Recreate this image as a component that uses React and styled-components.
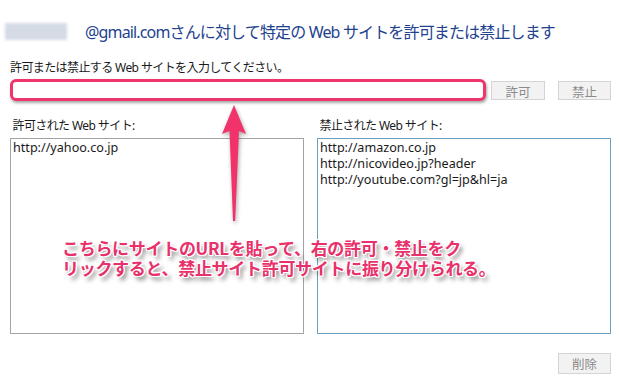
import React from "react";
import styled, { createGlobalStyle } from "styled-components";

const GlobalStyle = createGlobalStyle`
  html, body {
    margin: 0;
    padding: 0;
    background: #fff;
  }
  body {
    font-family: "Noto Sans", "Noto Sans CJK JP", sans-serif;
    color: #222;
  }
`;

const Page = styled.div`
  position: relative;
  width: 619px;
  height: 382px;
  box-sizing: border-box;
  padding: 20px 8px 0 10px;
  overflow: hidden;
`;

const Title = styled.h1`
  margin: 0 0 0 -5px;
  display: flex;
  align-items: center;
  height: 22px;
  font-size: 16px;
  font-weight: 400;
  color: #22428f;
  white-space: nowrap;
  letter-spacing: -0.85px;
`;

const Blurred = styled.span`
  display: inline-block;
  flex: none;
  width: 62px;
  height: 17px;
  background: #d5dbe4;
  filter: blur(1.5px);
`;

const TitleText = styled.span`
  margin-left: 18px;
`;

const Label = styled.div`
  margin-top: ${(p) => p.$top || 0}px;
  font-size: 12px;
  line-height: 16px;
  letter-spacing: -0.6px;
  color: #1a1a1a;
  white-space: nowrap;
`;

const InputRow = styled.div`
  display: flex;
  align-items: center;
  margin-top: 3px;
  height: 22px;
`;

const UrlInput = styled.input`
  flex: 1;
  height: 22px;
  box-sizing: border-box;
  margin: 0 5px 0 0;
  border: 3px solid #ee356c;
  border-radius: 6px;
  box-shadow: 1px 2px 3px rgba(0, 0, 0, 0.35);
  background: #fff;
  outline: none;
`;

const Button = styled.button`
  width: ${(p) => p.$w || 53}px;
  height: ${(p) => p.$h || 19}px;
  margin-left: ${(p) => p.$gap || 0}px;
  padding: 0;
  border: 1px solid #d4d4d4;
  background: #f2f2f2;
  color: #8a8a8a;
  font-family: "Noto Sans CJK JP", sans-serif;
  font-size: 12.5px;
`;

const Columns = styled.div`
  display: grid;
  grid-template-columns: 1fr 1fr;
  column-gap: 13px;
  margin-top: 17px;
`;

const Column = styled.div`
  display: flex;
  flex-direction: column;
`;

const ListBox = styled.div`
  margin-top: 4px;
  height: 196px;
  box-sizing: border-box;
  border: 1px solid ${(p) => (p.$focused ? "#6c9fc0" : "#a3a3a3")};
  padding: 1px 2px;
  font-family: "Noto Sans", sans-serif;
  font-size: 12.6px;
  line-height: 16px;
  color: #1a1a1a;
`;

const Footer = styled.div`
  display: flex;
  justify-content: flex-end;
  margin-top: 19px;
`;

const Arrow = styled.svg`
  position: absolute;
  left: 220px;
  top: 103px;
  filter: drop-shadow(1px 2px 2px rgba(0, 0, 0, 0.35));
`;

const Note = styled.div`
  position: absolute;
  left: 62px;
  top: 238px;
  font-family: "Noto Sans CJK JP", sans-serif;
  font-weight: 700;
  font-size: 17px;
  line-height: 20px;
  letter-spacing: -0.3px;
  color: #e8306b;
  white-space: nowrap;
  text-shadow:
    1px 0 0 #fff, -1px 0 0 #fff, 0 1px 0 #fff, 0 -1px 0 #fff,
    1px 1px 0 #fff, -1px -1px 0 #fff, 1px -1px 0 #fff, -1px 1px 0 #fff,
    3px 4px 4px rgba(0, 0, 0, 0.5);
`;

const allowed = ["http://yahoo.co.jp"];
const blocked = [
  "http://amazon.co.jp",
  "http://nicovideo.jp?header",
  "http://youtube.com?gl=jp&hl=ja",
];

export default function App() {
  return (
    <Page>
      <GlobalStyle />
      <Title>
        <Blurred />
        <TitleText>@gmail.comさんに対して特定の Web サイトを許可または禁止します</TitleText>
      </Title>

      <Label $top={18}>許可または禁止する Web サイトを入力してください。</Label>
      <InputRow>
        <UrlInput />
        <Button $w={54}>許可</Button>
        <Button $w={53} $gap={13}>禁止</Button>
      </InputRow>

      <Columns>
        <Column>
          <Label>&nbsp;許可された Web サイト:</Label>
          <ListBox>
            {allowed.map((url) => (
              <div key={url}>{url}</div>
            ))}
          </ListBox>
        </Column>
        <Column>
          <Label>&nbsp;禁止された Web サイト:</Label>
          <ListBox $focused>
            {blocked.map((url) => (
              <div key={url}>{url}</div>
            ))}
          </ListBox>
        </Column>
      </Columns>

      <Footer>
        <Button $w={53} $h={21}>削除</Button>
      </Footer>

      <Arrow width="30" height="122" viewBox="0 0 30 122">
        <path
          d="M14 2 L26 31 L19 28 L15.2 118 L13 118 L9.5 28 L2 31 Z"
          fill="#f2336b"
        />
      </Arrow>

      <Note>
        こちらにサイトのURLを貼って、右の許可・禁止をク
        <br />
        リックすると、禁止サイト許可サイトに振り分けられる。
      </Note>
    </Page>
  );
}
